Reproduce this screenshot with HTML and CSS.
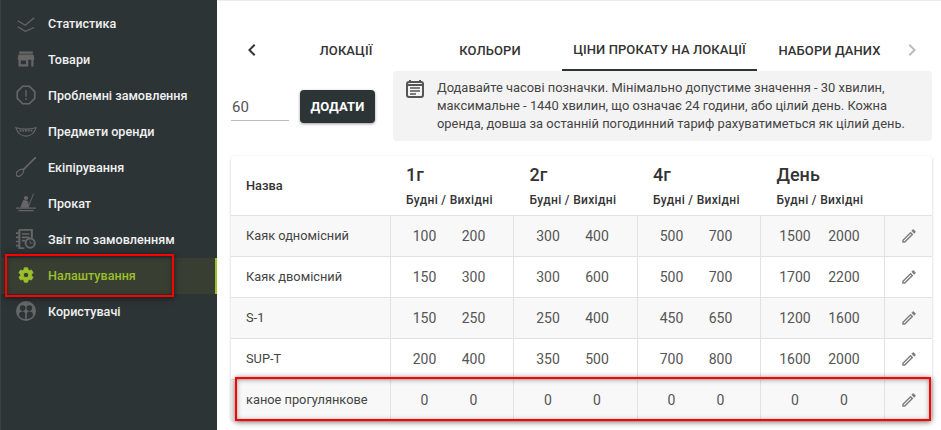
FILE: index.html
```html
<!DOCTYPE html>
<html lang="uk">
<head>
    <meta charset="UTF-8">
    <meta name="viewport" content="width=device-width, initial-scale=1.0">
    <title>Налаштування</title>
    <link rel="stylesheet" href="styles.css">
</head>
<body>
    <aside class="sidebar">
        <a class="menu-item">
            <svg class="menu-icon" viewBox="0 0 24 24"><path d="M1 9l10 6 12-10M1 17l10 6 12-5" fill="none" stroke="#666" stroke-width="1.600"/></svg>
            <span>Статистика</span>
        </a>
        <a class="menu-item">
            <svg class="menu-icon" viewBox="0 0 24 24"><path d="M3 2h18v3H3zM2 6h20l1 5v2h-1v9h-3v-9h-4v9H2v-9H1v-2zM5 14v5h7v-5z" fill="#666"/></svg>
            <span>Товари</span>
        </a>
        <a class="menu-item">
            <svg class="menu-icon menu-icon-big" viewBox="0 0 24 24"><path d="M8 1.500h8L22.500 8v8L16 22.500H8L1.500 16V8z" fill="none" stroke="#666" stroke-width="2"/><path d="M11.200 6h1.600v8h-1.600zM11.200 16h1.600v2h-1.600z" fill="#666"/></svg>
            <span>Проблемні замовлення</span>
        </a>
        <a class="menu-item">
            <svg class="menu-icon menu-icon-wide" viewBox="0 0 24 12"><path d="M1 2c6 1.500 16 1.500 22 0-2 6-6 9-11 9S3 8 1 2z" fill="none" stroke="#666" stroke-width="1.200"/><path d="M5 5h14" stroke="#666" stroke-width="2" stroke-dasharray="2 1"/></svg>
            <span>Предмети оренди</span>
        </a>
        <a class="menu-item">
            <svg class="menu-icon menu-icon-big" viewBox="0 0 24 24"><path d="M24 0L8 16" stroke="#666" stroke-width="2"/><path d="M9 15c1 2-1 5-3 7-2 1.500-4 1.500-5 .5s-1-3 .5-5c2-2 5.500-3.500 7.500-2.500z" fill="none" stroke="#666" stroke-width="1.500"/></svg>
            <span>Екіпірування</span>
        </a>
        <a class="menu-item">
            <svg class="menu-icon menu-icon-big" viewBox="0 0 24 24"><circle cx="12" cy="6" r="2.500" fill="#666"/><path d="M9 9l5 1 1 7H6zM21 1L15 16" fill="#666" stroke="#666" stroke-width="1.200"/><path d="M0 18h24M3 21h18" stroke="#666" stroke-width="1.500"/></svg>
            <span>Прокат</span>
        </a>
        <a class="menu-item">
            <svg class="menu-icon menu-icon-big" viewBox="0 0 24 24"><path d="M4 1h15v10M10 23H4V1" fill="none" stroke="#666" stroke-width="2.400"/><path d="M7 6h9M7 10h9M7 14h4M0 5h5M0 10h5M0 15h5M0 20h5" stroke="#666" stroke-width="2"/><circle cx="17" cy="17" r="5.500" fill="none" stroke="#666" stroke-width="2.400"/><path d="M17 14v3h3" fill="none" stroke="#666"/></svg>
            <span>Звіт по замовленням</span>
        </a>
        <a class="menu-item menu-item-active">
            <svg class="menu-icon" viewBox="0 0 24 24"><path d="M19.140 12.940c.04-.3.06-.61.06-.94s-.02-.64-.07-.94l2.030-1.580a.49.490 0 0 0 .12-.61l-1.920-3.320a.49.490 0 0 0-.59-.22l-2.390.96c-.5-.38-1.030-.7-1.620-.94l-.36-2.540a.48.480 0 0 0-.48-.41h-3.840a.48.480 0 0 0-.47.410l-.36 2.540c-.59.240-1.130.57-1.620.94l-2.390-.96a.48.480 0 0 0-.59.220L2.740 8.870a.48.480 0 0 0 .12.610l2.030 1.580c-.05.3-.09.630-.09.940s.02.640.07.940l-2.030 1.580a.49.490 0 0 0-.12.610l1.920 3.320c.12.220.37.290.59.220l2.390-.96c.5.380 1.030.7 1.620.94l.36 2.540c.05.240.24.410.48.410h3.840c.24 0 .44-.17.47-.41l.36-2.540c.59-.24 1.130-.56 1.620-.94l2.390.96c.22.080.47 0 .59-.22l1.920-3.320a.49.490 0 0 0-.12-.61zM12 15.600A3.610 3.610 0 0 1 8.400 12 3.610 3.610 0 0 1 12 8.400a3.610 3.610 0 0 1 3.600 3.600 3.610 3.610 0 0 1-3.600 3.600z" fill="#9bc02a" stroke="#9bc02a" stroke-width="1.200"/></svg>
            <span>Налаштування</span>
        </a>
        <a class="menu-item">
            <svg class="menu-icon menu-icon-big" viewBox="0 0 24 24"><circle cx="12" cy="12" r="12" fill="#666"/><circle cx="8" cy="8.500" r="3.400" fill="#2d3436"/><circle cx="16" cy="8.500" r="3.400" fill="#2d3436"/><path d="M3.500 17c0-3.500 2-4.500 4.500-4.500 2 0 3 1.500 3 3v6c-3 0-6-1.500-7.500-4.500zM13 21.500v-6c0-1.500 1-3 3-3 2.500 0 4.500 1 4.500 4.500-1.500 3-4.500 4.500-7.500 4.500z" fill="#2d3436"/></svg>
            <span>Користувачі</span>
        </a>
    </aside>

    <main class="content">
        <nav class="tabs">
            <svg class="tab-arrow" viewBox="0 0 24 24"><path d="M15.400 7.400L14 6l-6 6 6 6 1.400-1.400L10.800 12z" fill="#333"/></svg>
            <a class="tab tab-locations">ЛОКАЦІЇ</a>
            <a class="tab tab-colors">КОЛЬОРИ</a>
            <a class="tab tab-prices tab-active">ЦІНИ ПРОКАТУ НА ЛОКАЦІЇ</a>
            <a class="tab tab-data">НАБОРИ ДАНИХ</a>
            <svg class="tab-arrow tab-arrow-next" viewBox="0 0 24 24"><path d="M8.600 16.600L10 18l6-6-6-6-1.400 1.400L13.200 12z" fill="#bbb"/></svg>
        </nav>

        <div class="toolbar">
            <div class="time-input">60</div>
            <button class="add-btn">ДОДАТИ</button>
            <div class="info-box">
                <svg class="info-icon" viewBox="0 0 18 19"><path d="M4 1v3M14 1v3" stroke="#555" stroke-width="2"/><rect x="1" y="3" width="16" height="15" rx="2" fill="none" stroke="#555" stroke-width="2"/><path d="M1 6h16" stroke="#555" stroke-width="2"/><path d="M4 9h10M4 12h10M4 15h6" stroke="#555" stroke-width="1.400"/></svg>
                <p>Додавайте часові позначки. Мінімально допустиме значення - 30 хвилин, максимальне - 1440 хвилин, що означає 24 години, або цілий день. Кожна оренда, довша за останній погодинний тариф рахуватиметься як цілий день.</p>
            </div>
        </div>

        <div class="card">
            <table class="prices">
                <thead>
                    <tr>
                        <th class="col-name">Назва</th>
                        <th><div class="period">1г</div><div class="days">Будні / Вихідні</div></th>
                        <th><div class="period">2г</div><div class="days">Будні / Вихідні</div></th>
                        <th><div class="period">4г</div><div class="days">Будні / Вихідні</div></th>
                        <th><div class="period">День</div><div class="days">Будні / Вихідні</div></th>
                        <th class="col-edit"></th>
                    </tr>
                </thead>
                <tbody>
                    <tr>
                        <td>Каяк одномісний</td>
                        <td><div class="pair"><span>100</span><span>200</span></div></td>
                        <td><div class="pair"><span>300</span><span>400</span></div></td>
                        <td><div class="pair"><span>500</span><span>700</span></div></td>
                        <td><div class="pair"><span>1500</span><span>2000</span></div></td>
                        <td class="edit"><svg class="edit-icon" viewBox="0 0 24 24"><path d="M3 17.250V21h3.750L17.810 9.940l-3.750-3.750zM5.920 19H5v-.92l9.060-9.060.92.92zM20.710 7.040a1 1 0 0 0 0-1.410l-2.340-2.340a1 1 0 0 0-1.410 0l-1.830 1.830 3.750 3.750z"/></svg></td>
                    </tr>
                    <tr>
                        <td>Каяк двомісний</td>
                        <td><div class="pair"><span>150</span><span>300</span></div></td>
                        <td><div class="pair"><span>300</span><span>600</span></div></td>
                        <td><div class="pair"><span>500</span><span>700</span></div></td>
                        <td><div class="pair"><span>1700</span><span>2200</span></div></td>
                        <td class="edit"><svg class="edit-icon" viewBox="0 0 24 24"><path d="M3 17.250V21h3.750L17.810 9.940l-3.750-3.750zM5.920 19H5v-.92l9.060-9.060.92.92zM20.710 7.040a1 1 0 0 0 0-1.410l-2.340-2.340a1 1 0 0 0-1.410 0l-1.830 1.830 3.750 3.750z"/></svg></td>
                    </tr>
                    <tr>
                        <td>S-1</td>
                        <td><div class="pair"><span>150</span><span>250</span></div></td>
                        <td><div class="pair"><span>250</span><span>400</span></div></td>
                        <td><div class="pair"><span>450</span><span>650</span></div></td>
                        <td><div class="pair"><span>1200</span><span>1600</span></div></td>
                        <td class="edit"><svg class="edit-icon" viewBox="0 0 24 24"><path d="M3 17.250V21h3.750L17.810 9.940l-3.750-3.750zM5.920 19H5v-.92l9.060-9.060.92.92zM20.710 7.040a1 1 0 0 0 0-1.410l-2.340-2.340a1 1 0 0 0-1.410 0l-1.830 1.830 3.750 3.750z"/></svg></td>
                    </tr>
                    <tr>
                        <td>SUP-T</td>
                        <td><div class="pair"><span>200</span><span>400</span></div></td>
                        <td><div class="pair"><span>350</span><span>500</span></div></td>
                        <td><div class="pair"><span>700</span><span>800</span></div></td>
                        <td><div class="pair"><span>1600</span><span>2000</span></div></td>
                        <td class="edit"><svg class="edit-icon" viewBox="0 0 24 24"><path d="M3 17.250V21h3.750L17.810 9.940l-3.750-3.750zM5.920 19H5v-.92l9.060-9.060.92.92zM20.710 7.040a1 1 0 0 0 0-1.410l-2.340-2.340a1 1 0 0 0-1.410 0l-1.830 1.830 3.750 3.750z"/></svg></td>
                    </tr>
                    <tr>
                        <td>каное прогулянкове</td>
                        <td><div class="pair"><span>0</span><span>0</span></div></td>
                        <td><div class="pair"><span>0</span><span>0</span></div></td>
                        <td><div class="pair"><span>0</span><span>0</span></div></td>
                        <td><div class="pair"><span>0</span><span>0</span></div></td>
                        <td class="edit"><svg class="edit-icon" viewBox="0 0 24 24"><path d="M3 17.250V21h3.750L17.810 9.940l-3.750-3.750zM5.920 19H5v-.92l9.060-9.060.92.92zM20.710 7.040a1 1 0 0 0 0-1.410l-2.340-2.340a1 1 0 0 0-1.410 0l-1.830 1.830 3.750 3.750z"/></svg></td>
                    </tr>
                </tbody>
            </table>
        </div>
    </main>

    <!-- червоні рамки поверх скріншоту -->
    <div class="mark mark-menu"></div>
    <div class="mark mark-row"></div>
</body>
</html>
```

FILE: styles.css
```css
* {
    box-sizing: border-box;
}

html, body {
    height: 430px;
    overflow: hidden;
}

body {
    margin: 0;
    display: flex;
    font-family: Roboto, "Noto Sans", sans-serif;
    color: #333;
    background-color: #fff;
}

.sidebar {
    width: 217px;
    flex-shrink: 0;
    padding-top: 6px;
    background-color: #2d3436;
    border-left: 1px solid #3b4143;
}

.menu-item {
    display: flex;
    align-items: center;
    height: 36px;
    padding-left: 16px;
    padding-bottom: 2px;
    font-size: 12.600px;
    font-weight: 500;
    color: #f0f0f0;
}

.menu-item span {
    margin-left: 13px;
}

.menu-icon {
    width: 18px;
    height: 18px;
    flex-shrink: 0;
}

.menu-icon-big {
    width: 20px;
    height: 20px;
    margin: 0 -1px 0 -1px;
}

.menu-icon-wide {
    width: 22px;
    height: 11px;
    margin-left: -2px;
    margin-right: -2px;
}

.menu-item-active {
    color: #9bc02a;
    background-color: #393e33;
    border-right: 2px solid #9bc02a;
}

.content {
    flex: 1;
    min-width: 0;
    padding: 28px 9px 0 14px;
    border-top: 1px solid #ececec;
}

.tabs {
    display: flex;
    align-items: center;
    height: 42px;
}

.tab-arrow {
    width: 24px;
    height: 24px;
    margin-left: 9px;
    flex-shrink: 0;
}

.tab-arrow-next {
    margin-left: -2px;
}

.tab {
    display: flex;
    align-items: center;
    justify-content: center;
    height: 42px;
    font-size: 13px;
    font-weight: 500;
    letter-spacing: 0.1px;
    color: #333;
}

.tab-locations {
    width: 144px;
    margin-left: 10px;
}

.tab-colors {
    width: 144px;
}

.tab-prices {
    width: 195px;
}

.tab-data {
    width: 145px;
}

.tab-active {
    border-bottom: 2px solid #2d3436;
}

.toolbar {
    display: flex;
    align-items: flex-end;
}

.time-input {
    width: 58px;
    height: 30px;
    padding: 7px 1px 0;
    margin-bottom: 20px;
    font-size: 15px;
    color: #555;
    border-bottom: 1px solid #bbb;
}

.add-btn {
    width: 75px;
    height: 33px;
    margin: 0 18px 18px 11px;
    padding: 0;
    font-family: inherit;
    font-size: 13px;
    font-weight: 700;
    letter-spacing: 0.1px;
    color: #fff;
    background-color: #2d3436;
    border: none;
    border-radius: 4px;
    box-shadow: 0 1px 3px rgba(0, 0, 0, 0.4);
}

.info-box {
    display: flex;
    width: 539px;
    height: 70px;
    padding: 8px 13px;
    background-color: #f3f3f3;
    border-radius: 4px;
}

.info-icon {
    width: 18px;
    height: 19px;
    flex-shrink: 0;
}

.info-box p {
    margin: 0 0 0 13px;
    font-size: 12.900px;
    line-height: 18px;
    color: #444;
}

.card {
    width: 701px;
    margin-top: 15px;
    background-color: #fff;
    border-radius: 4px;
    box-shadow: 0 1px 3px rgba(0, 0, 0, 0.2);
    overflow: hidden;
}

.prices {
    width: 701px;
    table-layout: fixed;
    border-collapse: collapse;
    font-size: 12.800px;
}

.prices th {
    width: 123.500px;
    height: 59px;
    padding: 0 0 0 16px;
    text-align: left;
    font-weight: 500;
    vertical-align: top;
}

.prices th.col-name {
    width: 159px;
    padding-left: 15px;
    font-weight: 500;
    font-size: 12.800px;
    vertical-align: middle;
}

.prices th.col-edit {
    width: 48px;
}

.period {
    margin-top: 7px;
    font-size: 18px;
    line-height: 24px;
}

.days {
    margin-top: 5px;
    font-size: 12px;
    line-height: 16px;
    letter-spacing: 0.33px;
}

.prices td {
    height: 41px;
    padding: 0 0 0 15px;
    color: #444;
    border-top: 1px solid #e2e2e2;
    border-left: 1px solid #e2e2e2;
}

.prices td:first-child {
    border-left: none;
}

.prices td:not(:first-child) {
    padding-left: 10px;
}

.prices tbody tr:nth-child(odd) {
    background-color: #f8f8f8;
}

.pair {
    display: flex;
    gap: 1px;
    font-size: 14px;
    color: #555;
}

.pair span {
    width: 48px;
    text-align: center;
}

.prices td.edit {
    padding-left: 15px;
}

.edit-icon {
    display: block;
    width: 18px;
    height: 18px;
    fill: #808080;
}

.mark {
    position: absolute;
    border: 2px solid #f00;
    box-shadow: 0 1px 6px rgba(0, 0, 0, 0.55), inset 0 1px 5px rgba(0, 0, 0, 0.35);
}

.mark-menu {
    left: 5px;
    top: 254px;
    width: 169px;
    height: 43px;
}

.mark-row {
    left: 235px;
    top: 377px;
    width: 696px;
    height: 44px;
}
```
